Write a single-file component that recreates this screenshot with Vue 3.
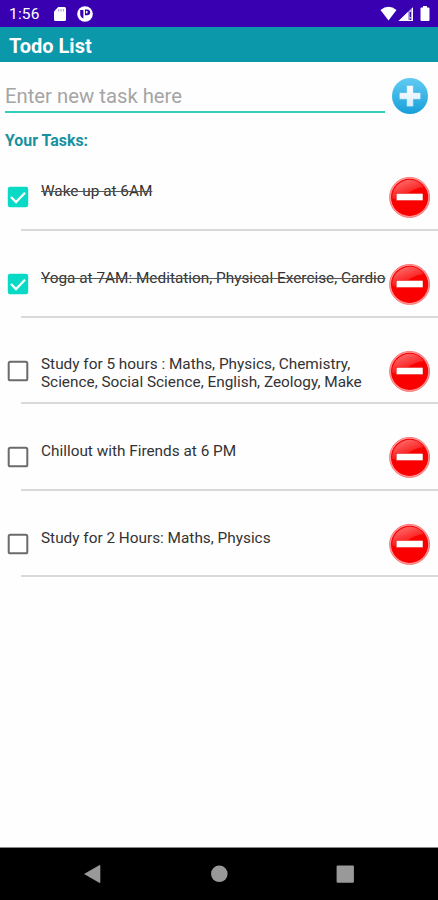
<script setup>
import { ref } from 'vue'

const draft = ref('')
const tasks = ref([
  { id: 1, done: true, lines: ['Wake up at 6AM'] },
  { id: 2, done: true, lines: ['Yoga at 7AM: Meditation, Physical Exercise, Cardio'] },
  {
    id: 3,
    done: false,
    lines: ['Study for 5 hours : Maths, Physics, Chemistry,', 'Science, Social Science, English, Zeology, Make'],
  },
  { id: 4, done: false, lines: ['Chillout with Firends at 6 PM'] },
  { id: 5, done: false, lines: ['Study for 2 Hours: Maths, Physics'] },
])

function addTask() {
  const text = draft.value.trim()
  if (!text) return
  tasks.value.push({ id: Date.now(), done: false, lines: [text] })
  draft.value = ''
}

function removeTask(id) {
  tasks.value = tasks.value.filter((t) => t.id !== id)
}
</script>

<template>
  <div class="screen">
    <header class="status">
      <span class="clock">1:56</span>
      <svg class="sd" viewBox="0 0 12 14"><path d="M4.2 0H10.5Q12 0 12 1.5V12.5Q12 14 10.5 14H1.5Q0 14 0 12.5V4.4Z" fill="#fff" /><path d="M4.7 2V4.5M7 2V4.5M9.3 2V4.5" stroke="#9a86e0" stroke-width=".9" /></svg>
      <svg class="badge" viewBox="0 0 16 16"><circle cx="8" cy="8" r="7.8" fill="#fff" /><path d="M3.2 4H6.4V12.6Q3.2 11.4 3.2 8Z" fill="#3900b1" /><path d="M8 3.4H10.2A2.9 2.9 0 0 1 10.2 9.2H8Z" fill="#3900b1" /><rect x="8.9" y="5" width="1.6" height="2.3" fill="#fff" /></svg>
      <span class="grow"></span>
      <svg class="signals" viewBox="0 0 50 16"><path d="M0.5 4Q8.5-2.7 16.5 4L8.5 14.5Z" fill="#fff" /><path d="M33 1V15H18.5Z" fill="#b8abe9" /><path d="M28 6V15H18.5Z" fill="#fff" /><path d="M32.5 2V14.5H28" fill="none" stroke="#fff" stroke-width="1" /><path d="M30.3 6V11M30.3 12.5V14" stroke="#3900b1" stroke-width="1.3" /><path d="M43 1.5V0H47V1.5H48.5Q49.5 1.5 49.5 2.5V14Q49.5 15 48.5 15H41.5Q40.5 15 40.5 14V2.5Q40.5 1.5 41.5 1.5Z" fill="#fff" /></svg>
    </header>
    <div class="appbar"><h1>Todo List</h1></div>
    <form class="entry" @submit.prevent="addTask">
      <input v-model="draft" class="field" placeholder="Enter new task here" />
      <button class="add" aria-label="Add task">
        <svg viewBox="0 0 38 38">
          <defs>
            <linearGradient id="addFill" x1="0" y1="0" x2="0" y2="1"><stop offset="0" stop-color="#62cbf3" /><stop offset="1" stop-color="#169fda" /></linearGradient>
            <linearGradient id="plusFill" x1="0" y1="0" x2="0" y2="1"><stop offset="0" stop-color="#fff" /><stop offset="1" stop-color="#d5eefb" /></linearGradient>
          </defs>
          <circle cx="19" cy="19" r="18" fill="url(#addFill)" />
          <path d="M15.7 8.6H22.3V15.7H29.6V22.3H22.3V29.4H15.7V22.3H8.4V15.7H15.7Z" fill="url(#plusFill)" stroke="#3daee0" stroke-opacity=".45" stroke-width=".8" />
        </svg>
      </button>
    </form>
    <h2>Your Tasks:</h2>
    <ul class="list">
      <li v-for="task in tasks" :key="task.id" class="row">
        <svg class="check" viewBox="0 0 22 22" @click="task.done = !task.done">
          <template v-if="task.done"><rect x=".8" y=".8" width="20.4" height="20.4" rx="2.2" fill="#08dac5" /><path d="M4 11L9 16L18 6.8" fill="none" stroke="#fff" stroke-width="2.3" /></template>
          <rect v-else x="1.7" y="1.7" width="18.6" height="18.6" rx="1.6" fill="#fff" stroke="#6b6b6b" stroke-width="2" />
        </svg>
        <div class="text" :class="{ done: task.done }">
          <div v-for="line in task.lines" :key="line">{{ line }}</div>
        </div>
        <button class="remove" aria-label="Remove task" @click="removeTask(task.id)">
          <svg viewBox="0 0 42 42">
            <defs>
              <linearGradient :id="'gloss' + task.id" x1="0" y1="0" x2=".6" y2="1"><stop offset="0" stop-color="#ff9c9c" /><stop offset=".8" stop-color="#fb1d1d" /></linearGradient>
            </defs>
            <circle cx="20.6" cy="21.4" r="20" fill="#ff9a9a" stroke="#fa7777" stroke-width="1" />
            <circle cx="20.6" cy="21.4" r="18.6" fill="#fa0000" />
            <path d="M3.3 22.4A17.5 17.5 0 0 1 34.8 10.9Q22 12.4 16 20.4Q10 25.4 3.3 22.4Z" :fill="`url(#gloss${task.id})`" opacity=".8" />
            <rect x="7.2" y="17.4" width="26.8" height="7.2" fill="#fff" stroke="#e60000" stroke-width=".5" />
          </svg>
        </button>
      </li>
    </ul>
    <footer class="nav">
      <svg viewBox="0 0 438 52"><path d="M84 26L99.2 17.2Q100.3 16.7 100.3 18V34Q100.3 35.3 99.2 34.8Z" fill="#999" /><circle cx="219.3" cy="25.8" r="8.3" fill="#999" /><rect x="336.6" y="17.4" width="17.3" height="17.3" rx="1" fill="#999" /></svg>
    </footer>
  </div>
</template>

<style>
body { margin: 0; background: #fff; }
</style>

<style scoped>
.screen { width: 438px; height: 900px; display: flex; flex-direction: column; overflow: hidden; background: #fefefe; font-family: Roboto, "Liberation Sans", sans-serif; }
.status { height: 27px; flex: none; box-sizing: border-box; padding: 1px 8px 0 9px; display: flex; align-items: center; background: #3900b1; color: #fff; }
.clock { width: 45px; font-size: 15.5px; line-height: 27px; letter-spacing: .2px; }
.sd { width: 12px; height: 14px; }
.badge { width: 16px; height: 16px; margin-left: 10.5px; }
.grow { flex: 1; }
.signals { width: 50px; height: 16px; display: block; }
.appbar { height: 35px; flex: none; background: #0b98aa; padding-left: 9px; }
h1 { margin: 0; font-size: 20px; line-height: 39px; font-weight: 700; color: #fff; }
.entry { height: 68px; flex: none; display: flex; align-items: center; padding-left: 5px; }
.field { box-sizing: border-box; width: 380px; height: 34px; padding: 2px 0 0; border: 0; border-bottom: 2px solid #35cfbf; outline: 0; background: none; font: 400 20.3px Roboto, sans-serif; color: #222; }
.field::placeholder { color: #a5a5a5; opacity: 1; }
button { border: 0; padding: 0; background: none; }
button svg { display: block; width: 100%; height: 100%; }
.add { width: 38px; height: 38px; margin-left: 5.5px; }
h2 { margin: 0; height: 14.4px; flex: none; padding-left: 5px; font-size: 15.9px; line-height: 22px; font-weight: 700; color: #1891a2; }
.list { margin: 0; padding: 0; list-style: none; flex: 1; }
.row { height: 86.6px; display: flex; align-items: flex-start; position: relative; }
.row::after { content: ""; position: absolute; left: 21px; right: 0; bottom: 0; height: 2px; background: #d9d9d9; }
.check { width: 22px; height: 22px; flex: none; margin: 42px 0 0 7px; }
.text { width: 348px; margin: 37.9px 0 0 12px; font-size: 15.35px; line-height: 18px; color: #333; white-space: nowrap; }
.done { text-decoration: line-through; text-decoration-color: #555; text-decoration-thickness: 1px; }
.remove { width: 42px; height: 42px; flex: none; margin-top: 32.1px; }
.nav { height: 52px; flex: none; background: #000; box-shadow: 0 -1px #888; }
.nav svg { display: block; width: 438px; height: 52px; }
</style>
